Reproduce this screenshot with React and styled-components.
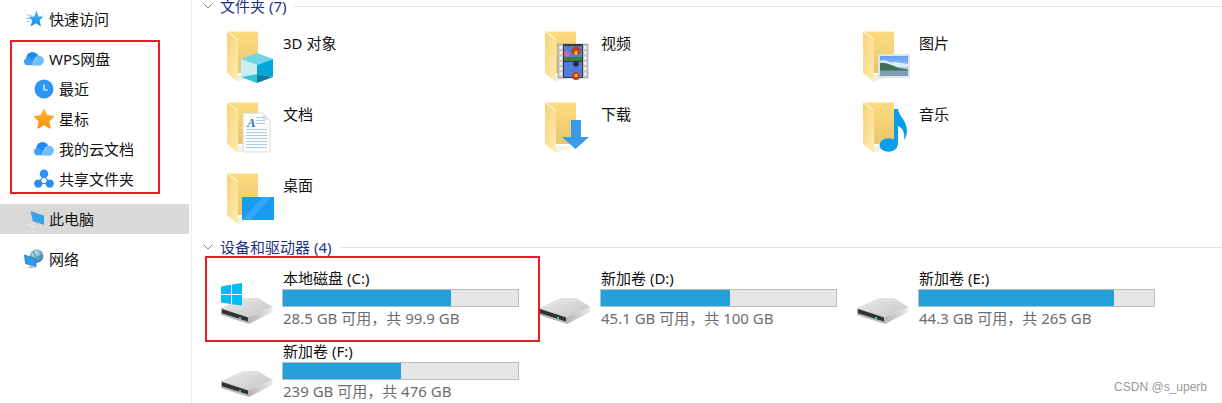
import React from "react";
import styled, { createGlobalStyle } from "styled-components";

const Global = createGlobalStyle`
  html, body { margin: 0; padding: 0; background: #fff; }
  body { font-family: "Noto Sans", "Noto Sans CJK SC", sans-serif; font-size: 15px; color: #111; }
  * { box-sizing: border-box; }
`;

const Page = styled.div`
  position: relative;
  display: flex;
  width: 1222px;
  height: 403px;
  overflow: hidden;
  background: #fff;
`;
const Sidebar = styled.nav`
  flex: none;
  width: 192px;
  padding: 4px 2px 0 0;
  border-right: 1px solid #f0f0f0;
`;
const NavGroup = styled.div`
  margin-bottom: 10px;
`;
const NavRow = styled.div`
  display: flex;
  align-items: center;
  gap: 5px;
  height: 30px;
  padding-left: ${(p) => (p.$level ? 34 : 24)}px;
  background: ${(p) => (p.$active ? "#d9d9d9" : "transparent")};
  line-height: 20px;
  white-space: nowrap;
`;
const NavIcon = styled.svg`
  flex: none;
  width: 20px;
  height: 20px;
`;
const Main = styled.main`
  flex: 1;
  min-width: 0;
  margin-top: -4px;
`;
const SectionHeader = styled.header`
  display: flex;
  align-items: center;
  height: 20px;
  padding-left: 11px;
  color: #1e3287;
  line-height: 20px;
  white-space: nowrap;
`;
const Chevron = styled.svg`
  flex: none;
  width: 10px;
  height: 6px;
  margin-right: 7px;
`;
const Rule = styled.span`
  flex: 1;
  height: 1px;
  margin-left: 8px;
  background: #e5e5e5;
`;
const FolderGrid = styled.div`
  display: grid;
  grid-template-columns: repeat(3, 318px);
  grid-auto-rows: 67px;
  row-gap: 4px;
  margin: 12px 0 0 27px;
`;
const FolderTile = styled.div`
  display: flex;
  align-items: flex-start;
  gap: 8px;
  padding: 3px 0 0 8px;
`;
const FolderName = styled.span`
  margin-top: 2px;
  line-height: 20px;
`;
const FolderArt = styled.svg`
  flex: none;
  width: 48px;
  height: 54px;
`;
const DriveGrid = styled.div`
  display: grid;
  grid-template-columns: repeat(3, 318px);
  grid-auto-rows: 73px;
  margin: 11px 0 0 27px;
`;
const DriveTile = styled.div`
  display: flex;
  align-items: flex-start;
  gap: 5px;
  padding-left: 2px;
`;
const DriveArt = styled.svg`
  flex: none;
  width: 56px;
  height: 44px;
  margin-top: 14px;
`;
const DriveInfo = styled.div`
  width: 237px;
`;
const DriveName = styled.div`
  padding-left: 1px;
  line-height: 20px;
  height: 21px;
  white-space: nowrap;
`;
const Meter = styled.div`
  height: 18px;
  border: 1px solid #bcbcbc;
  background: #e6e6e6;
`;
const MeterFill = styled.div`
  height: 100%;
  background: #26a0da;
`;
const DriveFree = styled.div`
  padding-left: 1px;
  line-height: 22px;
  color: #6d6d6d;
  white-space: nowrap;
`;
const Annotation = styled.div`
  position: absolute;
  left: ${(p) => p.$x}px;
  top: ${(p) => p.$y}px;
  width: ${(p) => p.$w}px;
  height: ${(p) => p.$h}px;
  border: 2px solid #ed1c24;
  pointer-events: none;
`;
const Watermark = styled.div`
  position: absolute;
  right: 15px;
  bottom: 9px;
  font-family: "Liberation Sans", Arial, sans-serif;
  font-size: 12px;
  line-height: 14px;
  color: #9a9a9a;
`;

const QuickIcon = () => (
  <NavIcon viewBox="0 0 20 20">
    <defs>
      <linearGradient id="qk" x1="0" y1="0" x2="0" y2="1">
        <stop offset="0" stopColor="#4fc3f7" />
        <stop offset="1" stopColor="#1088e4" />
      </linearGradient>
    </defs>
    <path d="M12.5 1.5 L14.6 7.4 L19.5 7.6 L15.6 11.2 L17 17.5 L12 14.3 L6.6 17.5 L8.2 11.4 L4.6 7.8 L10 7.4 Z" fill="url(#qk)" />
    <path d="M2.5 5.5 L8 7 M1.5 9 L6 9.6 M3 12.5 L6.5 12" stroke="#a9c6e0" strokeWidth="1" fill="none" />
  </NavIcon>
);
const CloudIcon = () => (
  <NavIcon viewBox="0 0 20 20">
    <g transform="translate(0 3)">
      <circle cx="8.5" cy="6.2" r="6.2" fill="#1f8af3" />
      <circle cx="3.6" cy="9.6" r="3.6" fill="#3d9ff6" />
      <rect x="3.6" y="8" width="10" height="5.2" fill="#3d9ff6" />
      <circle cx="15" cy="8.6" r="4.9" fill="#6fbdfa" />
      <path d="M8 13.4 C9.5 11 10 8 12.5 5.2" stroke="#eaf5fe" strokeWidth="0.7" fill="none" />
      <path d="M8 13.5 C10 10 12 7 15 7 L17 13.5 Z" fill="#6fbdfa" />
    </g>
  </NavIcon>
);
const ClockIcon = () => (
  <NavIcon viewBox="0 0 20 20">
    <circle cx="10" cy="10" r="9.5" fill="#2d96f6" />
    <path d="M10 5.5 V11 H14" stroke="#fff" strokeWidth="1.2" fill="none" />
  </NavIcon>
);
const StarIcon = () => (
  <NavIcon viewBox="0 0 20 20">
    <defs>
      <linearGradient id="st" x1="0" y1="0" x2="0" y2="1">
        <stop offset="0" stopColor="#ffb52c" />
        <stop offset="1" stopColor="#f98e0c" />
      </linearGradient>
    </defs>
    <path d="M10 0.3 L13 6.6 L20 7.5 L14.8 12.2 L16.2 19.3 L10 15.8 L3.8 19.3 L5.2 12.2 L0 7.5 L7 6.6 Z" fill="url(#st)" stroke="url(#st)" strokeLinejoin="round" />
  </NavIcon>
);
const ShareIcon = () => (
  <NavIcon viewBox="0 0 20 20">
    <path d="M10 6 L4.5 14.5 H15.5 Z" fill="none" stroke="#2c8ff2" strokeWidth="1.2" />
    <circle cx="10" cy="4.8" r="4.3" fill="#2c8ff2" />
    <circle cx="4.3" cy="14.6" r="4.2" fill="#2c8ff2" />
    <circle cx="15.7" cy="14.6" r="4.2" fill="#2c8ff2" />
  </NavIcon>
);
const PcIcon = () => (
  <NavIcon viewBox="0 0 20 20">
    <path d="M7 2.4 L20 7 V15.5 L9 12 Z" fill="#35a2f0" stroke="#5d8aa8" strokeWidth="0.5" />
    <path d="M13 13.4 L16 14.5 L12 16 L10.5 15 Z" fill="#c9ced2" />
    <path d="M0 15.5 L3 14 L14 18 L11 19.5 Z" fill="#e6e6e6" stroke="#c4c4c4" strokeWidth="0.4" />
  </NavIcon>
);
const NetIcon = () => (
  <NavIcon viewBox="0 0 20 20">
    <defs>
      <radialGradient id="gl" cx="0.4" cy="0.3" r="0.8">
        <stop offset="0" stopColor="#c9ecfa" />
        <stop offset="1" stopColor="#1f6f9e" />
      </radialGradient>
    </defs>
    <circle cx="12.5" cy="7" r="6.8" fill="url(#gl)" />
    <path d="M9 2.5 C12 4.5 10 7 13 8.5 C15 9.5 16 6.5 18.5 6.5" stroke="#4f8aa8" strokeWidth="1.3" fill="none" />
    <path d="M0.5 6 L12 10 V18 L1.5 14.5 Z" fill="#2b9df0" stroke="#245a7a" strokeWidth="0.6" />
    <path d="M3 18.5 L8 16.5 L12 18 L7 19.5 Z" fill="#b9c4ca" />
  </NavIcon>
);

const Folder = ({ id, children }) => (
  <FolderArt viewBox="0 0 48 54">
    <defs>
      <linearGradient id={`${id}b`} x1="0" y1="0" x2="0" y2="1">
        <stop offset="0" stopColor="#fddc7f" />
        <stop offset="1" stopColor="#e9c56d" />
      </linearGradient>
      <linearGradient id={`${id}f`} x1="0" y1="0" x2="1" y2="1">
        <stop offset="0" stopColor="#f6d278" />
        <stop offset="1" stopColor="#ffedb2" />
      </linearGradient>
    </defs>
    <path d="M0 0 H31 V42 H11 V8 Z" fill={`url(#${id}b)`} />
    <path d="M31 0 V1 H1 V0 Z" fill="#fff0bf" />
    <path d="M0 1 L11 9 V51 L0 42 Z" fill={`url(#${id}f)`} />
    <path d="M11 44 H31 L25 46 L11 51 Z" fill="#f4f1e8" />
    {children}
  </FolderArt>
);

const overlays = {
  cube: (
    <g>
      <path d="M30 22 L46 28 L30 34 L14 28 Z" fill="#6fd5e6" />
      <path d="M14 28 L30 34 V43 L14 46 Z" fill="#c9eff3" />
      <path d="M46 28 L30 34 V43 L46 46 Z" fill="#02a8d9" />
      <path d="M14 46 L30 43 V52 Z" fill="#36c4d8" />
      <path d="M30 43 L46 46 L30 52 Z" fill="#0b7ea4" />
    </g>
  ),
  film: (
    <g>
      <rect x="13" y="13" width="30" height="34" fill="#c6c6c6" />
      <rect x="13" y="13" width="30" height="34" fill="none" stroke="#8f8f8f" strokeWidth="0.6" />
      {[0, 1, 2, 3, 4, 5].map((i) => (
        <g key={i}>
          <rect x="14.5" y={15 + i * 5.3} width="2.5" height="3" fill="#f2f2f2" />
          <rect x="39" y={15 + i * 5.3} width="2.5" height="3" fill="#f2f2f2" />
        </g>
      ))}
      <rect x="18" y="13" width="20" height="34" fill="#3a3a3a" />
      <rect x="19" y="15" width="18" height="15" fill="#4c82d8" />
      <rect x="19" y="31" width="18" height="15" fill="#4d7edb" />
      <rect x="19" y="26" width="18" height="4" fill="#3b7d3a" />
      <circle cx="31" cy="20" r="4.5" fill="#c23b22" />
      <path d="M29.5 20 h3 v4 h-3 Z" fill="#e6c229" />
      <circle cx="22" cy="23" r="2.8" fill="#d9639b" />
      <circle cx="31" cy="33" r="2.8" fill="#1f2a3a" />
      <circle cx="31" cy="45" r="4" fill="#c23b22" />
      <path d="M29.6 43 h3 v3 h-3 Z" fill="#e6c229" />
    </g>
  ),
  picture: (
    <g>
      <rect x="15" y="23" width="32" height="24" fill="#e2e2e2" />
      <defs>
        <linearGradient id="sky" x1="0" y1="0" x2="0" y2="1">
          <stop offset="0" stopColor="#5f9ff5" />
          <stop offset="1" stopColor="#cfe6f3" />
        </linearGradient>
      </defs>
      <rect x="17" y="25" width="28" height="20" fill="url(#sky)" />
      <path d="M17 30 C22 27 27 33 32 31 L45 33 V36 H17 Z" fill="#dbeef5" />
      <path d="M17 32 C23 31 30 35 36 37 L45 38.5 V40 H17 Z" fill="#3f6f57" />
      <rect x="17" y="39.5" width="28" height="5.5" fill="#7c9fb5" />
    </g>
  ),
  doc: (
    <g>
      <path d="M16 11 H36 L43 18 V50 H16 Z" fill="#fbfbfb" stroke="#d0d0d0" strokeWidth="0.7" />
      <path d="M36 11 V18 H43 Z" fill="#dfe5ea" />
      <text x="20" y="25" fontFamily="Liberation Serif, serif" fontStyle="italic" fontWeight="700" fontSize="13" fill="#2d74c4">A</text>
      {[15, 18, 21].map((y) => (
        <rect key={y} x="29" y={y} width="9" height="1" fill="#a9cdea" />
      ))}
      {[27, 30, 33, 36, 39, 42, 45].map((y) => (
        <rect key={y} x="19" y={y} width="21" height="1" fill="#a9cdea" />
      ))}
    </g>
  ),
  down: <path d="M26 18 H36 V35 H44 L30.5 47 L17 35 H26 Z" fill="#3a9bec" />,
  music: (
    <g fill="#0a9eea">
      <ellipse cx="25.5" cy="43" rx="9" ry="6.8" />
      <path d="M31 7 H35 C35.5 14 44 18 44 29 C44 33 42.5 36 41 38 C42 31 40 26 35 24 V43 H31 Z" />
    </g>
  ),
  desktop: (
    <g>
      <rect x="15" y="24" width="32" height="23" fill="#1a9bf3" />
      <path d="M15 47 L36 24 H44 L24 47 Z" fill="#4fb7fa" opacity="0.45" />
    </g>
  ),
};

const folders = [
  { name: "3D 对象", art: "cube" },
  { name: "视频", art: "film" },
  { name: "图片", art: "picture" },
  { name: "文档", art: "doc" },
  { name: "下载", art: "down" },
  { name: "音乐", art: "music" },
  { name: "桌面", art: "desktop" },
];

const drives = [
  { name: "本地磁盘 (C:)", free: "28.5 GB 可用，共 99.9 GB", used: 71.5, win: true },
  { name: "新加卷 (D:)", free: "45.1 GB 可用，共 100 GB", used: 55 },
  { name: "新加卷 (E:)", free: "44.3 GB 可用，共 265 GB", used: 83 },
  { name: "新加卷 (F:)", free: "239 GB 可用，共 476 GB", used: 50 },
];

const Drive = ({ id, win }) => (
  <DriveArt viewBox="0 0 56 44">
    <defs>
      <linearGradient id={`${id}t`} x1="0" y1="0" x2="1" y2="1">
        <stop offset="0" stopColor="#ececec" />
        <stop offset="1" stopColor="#c4c4c4" />
      </linearGradient>
      <linearGradient id={`${id}r`} x1="0" y1="0" x2="1" y2="0">
        <stop offset="0" stopColor="#b5b5b5" />
        <stop offset="1" stopColor="#ececec" />
      </linearGradient>
    </defs>
    <path d="M22 16 L37 16 L51.5 25 L28 35 L0 26 Z" fill={`url(#${id}t)`} />
    <path d="M0 26 L28 35 V42 L0 33 Z" fill="#b8b8b8" />
    <path d="M1 27 L27 35.4 V39.5 L1 31.3 Z" fill="#333" />
    <path d="M28 35 L51.5 25 V30 L28 42 Z" fill={`url(#${id}r)`} />
    <rect x="18" y="35" width="2" height="1.8" fill="#3ddc6a" />
    {win && (
      <g fill="#00bdf6">
        <path d="M0 4.5 L10 2.7 V12 H0 Z" />
        <path d="M11 2.5 L21 1 V12 H11 Z" />
        <path d="M0 13 H10 V22 L0 20.5 Z" />
        <path d="M11 13 H21 V23.5 L11 22.2 Z" />
      </g>
    )}
  </DriveArt>
);

const SectionTitle = ({ children }) => (
  <SectionHeader>
    <Chevron viewBox="0 0 10 6">
      <path d="M0.5 0.5 L5 5 L9.5 0.5" fill="none" stroke="#8a8a8a" strokeWidth="1" />
    </Chevron>
    {children}
    <Rule />
  </SectionHeader>
);

export default function App() {
  return (
    <Page>
      <Global />
      <Sidebar>
        <NavGroup>
          <NavRow><QuickIcon />快速访问</NavRow>
        </NavGroup>
        <NavGroup>
          <NavRow><CloudIcon />WPS网盘</NavRow>
          <NavRow $level={1}><ClockIcon />最近</NavRow>
          <NavRow $level={1}><StarIcon />星标</NavRow>
          <NavRow $level={1}><CloudIcon />我的云文档</NavRow>
          <NavRow $level={1}><ShareIcon />共享文件夹</NavRow>
        </NavGroup>
        <NavGroup>
          <NavRow $active><PcIcon />此电脑</NavRow>
        </NavGroup>
        <NavGroup>
          <NavRow><NetIcon />网络</NavRow>
        </NavGroup>
      </Sidebar>
      <Main>
        <SectionTitle>文件夹 (7)</SectionTitle>
        <FolderGrid>
          {folders.map((f) => (
            <FolderTile key={f.name}>
              <Folder id={f.art}>{overlays[f.art]}</Folder>
              <FolderName>{f.name}</FolderName>
            </FolderTile>
          ))}
        </FolderGrid>
        <SectionTitle>设备和驱动器 (4)</SectionTitle>
        <DriveGrid>
          {drives.map((d, i) => (
            <DriveTile key={d.name}>
              <Drive id={`dr${i}`} win={d.win} />
              <DriveInfo>
                <DriveName>{d.name}</DriveName>
                <Meter><MeterFill style={{ width: `${d.used}%` }} /></Meter>
                <DriveFree>{d.free}</DriveFree>
              </DriveInfo>
            </DriveTile>
          ))}
        </DriveGrid>
      </Main>
      <Annotation $x={10} $y={40} $w={150} $h={154} />
      <Annotation $x={205} $y={256} $w={335} $h={86} />
      <Watermark>CSDN @s_uperb</Watermark>
    </Page>
  );
}
